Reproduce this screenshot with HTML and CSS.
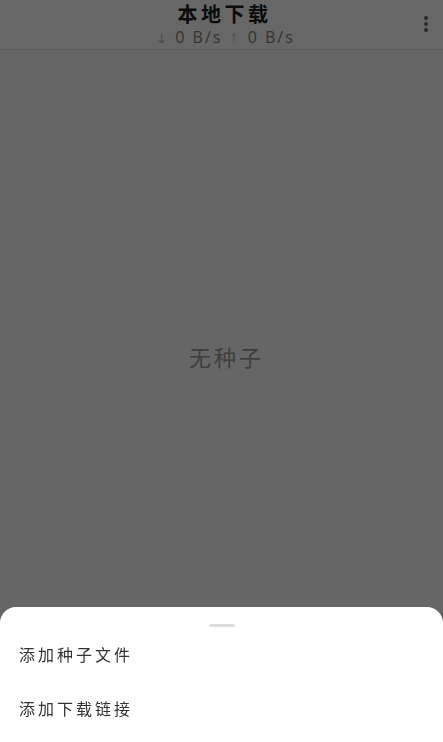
FILE: index.html
```html
<!DOCTYPE html>
<html lang="zh">
<head>
<meta charset="utf-8">
<title>本地下载</title>
<link rel="stylesheet" href="styles.css">
</head>
<body>
<div class="app">
  <header class="topbar">
    <div class="titles">
      <div class="title">本地下载</div>
      <div class="speed"><span class="arrow">↓</span> 0 B/s <span class="arrow up">↑</span> 0 B/s</div>
    </div>
    <div class="more">
      <svg width="6" height="18" viewBox="0 0 6 18"><circle cx="3" cy="3" r="2" fill="#2a2a2a"/><circle cx="3" cy="9" r="2" fill="#2a2a2a"/><circle cx="3" cy="15" r="2" fill="#2a2a2a"/></svg>
    </div>
  </header>
  <main class="content">
    <div class="empty">无种子</div>
  </main>
</div>
<div class="sheet">
  <div class="handle"></div>
  <div class="item">添加种子文件</div>
  <div class="item">添加下载链接</div>
</div>
</body>
</html>
```
FILE: styles.css
```css
html, body {
  margin: 0;
  padding: 0;
  background: #666666;
  font-family: "Noto Sans CJK SC", "Noto Sans", sans-serif;
}
.app {
  height: 742px;
  display: flex;
  flex-direction: column;
  overflow: hidden;
}
.topbar {
  height: 49px;
  border-bottom: 1px solid #5e5e5e;
  background: #676767;
  display: flex;
  align-items: flex-start;
  justify-content: center;
  position: relative;
}
.titles {
  display: flex;
  flex-direction: column;
  align-items: center;
  padding-top: 2px;
}
.title {
  font-size: 20px;
  font-weight: 700;
  color: #0c0c0c;
  letter-spacing: 3.5px;
  line-height: 23px;
  padding-left: 6px;
}
.speed {
  font-family: "Open Sans", "Noto Sans", sans-serif;
  font-size: 16px;
  color: #333333;
  letter-spacing: 2px;
  line-height: 18px;
  margin-top: 3px;
  padding-left: 8px;
}
.arrow {
  color: #3a3a3a;
  font-family: "DejaVu Sans", sans-serif;
  font-size: 13px;
  font-weight: 300;
}
.arrow.up {
  color: #4c4c4c;
}
.more {
  position: absolute;
  right: 14px;
  top: 14px;
}
.content {
  flex: 1;
  display: flex;
  align-items: center;
  justify-content: center;
  padding-bottom: 80px;
}
.empty {
  font-size: 22px;
  color: #3e3e3e;
  letter-spacing: 3px;
  padding-left: 10px;
}
.sheet {
  position: fixed;
  left: 0;
  right: 0;
  top: 607px;
  bottom: 0;
  background: #ffffff;
  border-radius: 16px 16px 0 0;
  display: flex;
  flex-direction: column;
  overflow: hidden;
}
.handle {
  flex: none;
  width: 26px;
  height: 3px;
  border-radius: 2px;
  background: #dddddd;
  margin: 17px auto 0;
}
.item {
  flex: none;
  height: 54px;
  display: flex;
  align-items: center;
  padding-left: 19px;
  font-size: 16px;
  color: #333333;
  letter-spacing: 3px;
}
.item:first-of-type {
  margin-top: 6px;
}
```
